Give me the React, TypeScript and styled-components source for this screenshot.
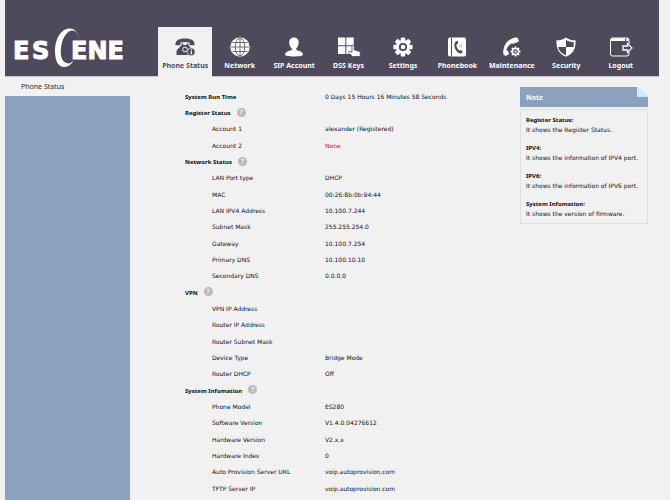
import React from "react";
import styled, { createGlobalStyle } from "styled-components";

const GlobalStyle = createGlobalStyle`
  * { box-sizing: border-box; }
  body {
    margin: 0;
    background: #f1f1f1;
    color: #101016;
    font-family: "Noto Sans", "Open Sans", sans-serif;
    font-size: 7px;
    line-height: 16px;
  }
  html { overflow: hidden; }
`;

const Page = styled.div`
  padding: 0 11px 0 5px;
`;

const Header = styled.header`
  display: flex;
  align-items: flex-end;
  height: 77px;
  padding-right: 11px;
  background: #4f495c;
  border-bottom: 1px solid #c9c6d0;
`;

const LogoLink = styled.a`
  flex: 0 0 153px;
  padding: 0 0 6px 8px;
  line-height: 0;
`;

const Nav = styled.nav`
  flex: 1;
  display: grid;
  grid-template-columns: repeat(9, 1fr);
  margin-bottom: -1px;
`;

const Tab = styled.a<{ $active?: boolean }>`
  display: flex;
  flex-direction: column;
  align-items: center;
  height: 50px;
  padding-top: 10px;
  gap: 1px;
  color: ${(p) => (p.$active ? "#4f495c" : "#ffffff")};
  background: ${(p) => (p.$active ? "#f1f1f1" : "transparent")};
  font-size: 7px;
  font-weight: 700;
  text-decoration: none;
  white-space: nowrap;
`;

const Columns = styled.div`
  display: flex;
  align-items: flex-start;
`;

const Side = styled.aside`
  flex: 0 0 125px;
  display: flex;
  flex-direction: column;
  height: calc(100vh - 77px);
`;

const SideLink = styled.a`
  height: 19px;
  padding-left: 16px;
  color: #2c2833;
  font-size: 7px;
  line-height: 20px;
  text-decoration: none;
`;

const SideFill = styled.div`
  flex: 1;
  background: #8ba1bd;
`;

const Main = styled.main`
  flex: 1;
  padding: 11px 0 0 55px;
`;

const StatusTable = styled.table`
  width: 100%;
  table-layout: fixed;
  border-collapse: collapse;
`;

const Row = styled.tr`
  height: 16px;
  &:nth-child(3n + 1) { height: 17px; }
`;

const NameCell = styled.th<{ $section?: boolean }>`
  width: 140px;
  padding: 0 0 0 ${(p) => (p.$section ? 0 : 27)}px;
  color: ${(p) => (p.$section ? "#08080c" : "inherit")};
  font-family: ${(p) => (p.$section ? '"Noto Sans"' : '"DejaVu Sans"')}, sans-serif;
  font-size: 6px;
  font-weight: ${(p) => (p.$section ? 700 : 400)};
  text-align: left;
  white-space: nowrap;
`;

const ValueCell = styled.td<{ $alert?: boolean }>`
  padding: 0;
  color: ${(p) => (p.$alert ? "#ff0000" : "inherit")};
  font-family: "DejaVu Sans", sans-serif;
  font-size: 6px;
  white-space: nowrap;
`;

const NameLine = styled.span`
  display: flex;
  align-items: center;
  gap: 6px;
  height: 16px;
`;

const HelpButton = styled.button`
  width: 9px;
  height: 9px;
  margin-bottom: 2px;
  padding: 0;
  border: 0;
  border-radius: 50%;
  background: #b9b9b9;
  color: #f1f1f1;
  font: 700 7px/9px "Noto Sans", sans-serif;
  text-align: center;
`;

const NoteColumn = styled.aside`
  flex: 0 0 128px;
  min-width: 0;
  margin: 10px 11px 0 0;
`;

const NoteTitle = styled.h2`
  display: flex;
  justify-content: space-between;
  height: 20px;
  margin: 0 0 2px;
  padding-left: 6px;
  background: #8ba1bd;
  color: #ffffff;
  font-size: 7px;
  line-height: 22px;
`;

const NoteBody = styled.dl`
  margin: 0;
  padding: 6px 5px 5px;
  border: 1px solid #dedede;
  font-size: 6px;
  line-height: 9px;
`;

const NoteTerm = styled.dt`
  color: #08080c;
  font-weight: 700;
  &:not(:first-child) { margin-top: 10px; }
`;

const NoteText = styled.dd`
  margin: 0;
  font-family: "DejaVu Sans", sans-serif;
  white-space: nowrap;
`;

const Logo = () => (
  <svg width="116" height="44" viewBox="0 0 116 44" role="img" aria-label="ESCENE">
    <g fill="#ffffff" stroke="#ffffff" strokeWidth="1" fontFamily="DejaVu Sans, sans-serif" fontWeight="700" fontSize="24">
      <text x="0" y="33">E</text>
      <text x="19" y="33">S</text>
      <text x="58" y="33">ENE</text>
    </g>
    <path
      d="M66 13C65 7 62 2.500 57 2.500C48 2.500 42 13 42 25C42 36 46 41 51 41C55 41 58.500 38.500 60.500 34.500C58 37 55.500 38 53.500 37C49 35.500 47 30 48 22C49 12 54 4.500 59.500 4.500C63 4.500 65 8 66 13Z"
      fill="#ffffff"
      stroke="#4f495c"
      strokeWidth="2"
      paintOrder="stroke"
    />
  </svg>
);

const Icon = ({ children }: { children: React.ReactNode }) => (
  <svg width="24" height="20" viewBox="0 0 24 20" fill="currentColor" aria-hidden="true">
    {children}
  </svg>
);

const ShadeBg = "#4f495c";

const gearTeeth = (cx: number, cy: number, r: number, w: number, h: number) =>
  [0, 45, 90, 135, 180, 225, 270, 315].map((a) => (
    <rect
      key={a}
      x={cx - w / 2}
      y={cy - r}
      width={w}
      height={h}
      rx={w / 5}
      transform={`rotate(${a} ${cx} ${cy})`}
    />
  ));

const PhoneIcon = () => (
  <Icon>
    <path d="M2.500 8.200C2 4 5 1.500 12 1.500C19 1.500 22 4 21.500 8.200L16.800 8.200L16.500 5.500C13.500 4.700 10.500 4.700 7.500 5.500L7.200 8.200Z" />
    <path d="M8.500 6.500H10.200V8H13.800V6.500H15.500V8.500C16.500 9.500 19.500 12.500 20 14V18H3.500V14C4.500 11.800 7.500 9.500 8.500 8.500Z" />
    <circle cx="12" cy="12.500" r="2.400" fill="none" stroke="#f1f1f1" strokeWidth="1" />
    <circle cx="18.200" cy="14.800" r="3.900" stroke="#f1f1f1" strokeWidth=".6" />
    <path d="M17.700 12.300H19V13.400H17.700ZM17.600 14.200H19V17.200H17.600Z" fill="#f1f1f1" />
  </Icon>
);

const GlobeIcon = () => (
  <Icon>
    <circle cx="12" cy="10" r="9.700" />
    <g fill="none" stroke={ShadeBg} strokeWidth=".8">
      <path d="M12 1V19M3 10H21M4.500 5.500H19.500M4.500 14.500H19.500" />
      <ellipse cx="12" cy="10" rx="4.700" ry="9" />
    </g>
  </Icon>
);

const UserIcon = () => (
  <Icon>
    <path d="M12 .5C8.800 .5 7 2.800 7.300 6C7.500 8.500 8.500 10.500 9.800 11.500V13C7 14 3.500 14.500 3 17.500C3 18.800 6.500 19.500 12 19.500C17.500 19.500 21 18.800 21 17.500C20.500 14.500 17 14 14.200 13V11.500C15.500 10.500 16.500 8.500 16.700 6C17 2.800 15.200 .5 12 .5Z" />
  </Icon>
);

const KeysIcon = () => (
  <Icon>
    <path d="M1 .5H8.300V8.300H1ZM9.300 .5H16.700V8.300H9.300ZM1 9.300H8.300V17H1ZM9.300 9.300H16.700V17H9.300Z" />
    <path
      d="M15.300 8.200C16.300 7.800 17.200 8.200 17.200 9.300V13L22 14.200C23 14.500 23.300 15 23.200 16V19.500H15.500L11.500 15.700C11 15 12 14 13 14.300L15 15.300V9Z"
      stroke={ShadeBg}
      strokeWidth=".8"
    />
  </Icon>
);

const SettingsIcon = () => (
  <Icon>
    <circle cx="12" cy="10" r="7" />
    {gearTeeth(12, 10, 9.6, 4.4, 4)}
    <circle cx="12" cy="10" r="3.200" fill="none" stroke={ShadeBg} strokeWidth="1.800" />
  </Icon>
);

const PhonebookIcon = () => (
  <Icon>
    <rect x="3" y=".5" width="18" height="19" rx="2" />
    <path d="M6.500 .5V19.500" stroke={ShadeBg} strokeWidth="1" />
    <path
      d="M12.500 3.500C9.800 4.500 9 7 9.500 10C10.300 13.300 12.500 15.800 15.500 16.500L18 15.500L16.300 13L14.300 13.500C12.500 12 11.500 10 11.400 7.500L13.300 6.500Z"
      fill={ShadeBg}
    />
    <path d="M14 8C14.600 8.600 14.600 9.600 14 10.300M15.800 6.500C16.800 7.700 16.800 9.700 15.800 11" fill="none" stroke={ShadeBg} strokeWidth=".4" />
  </Icon>
);

const MaintenanceIcon = () => (
  <Icon>
    <path d="M12 1.500C6.500 4 3.500 9 3.200 15.500C3.100 17.500 4.500 19.300 6.200 18.700L8.500 17.500C9.200 17 9.200 16.400 8.800 15.800L7.500 13.700C7.100 13.200 6.700 13.300 6.300 13.500C6.500 10.500 9 7.500 12.200 6.200C12.500 6.900 13.300 7 14 6.600L17.800 5C18.800 4.500 19 3.800 18.700 3L18 1.500C17.400 .3 15 .3 12 1.500Z" />
    <g>{gearTeeth(15.500, 14.500, 5, 2, 3)}</g>
    <circle cx="15.500" cy="14.500" r="3.600" />
    <circle cx="15.500" cy="14.500" r="2.300" fill={ShadeBg} />
    <circle cx="15.500" cy="14.500" r="1.100" />
  </Icon>
);

const ShieldIcon = () => (
  <Icon>
    <path d="M12 .5C9.500 2.500 6 3.300 2.500 3.300C2 11 4.500 17 12 19.700C19.500 17 22 11 21.500 3.300C18 3.300 14.500 2.500 12 .5Z" />
    <path d="M12 10V3C14.500 4.500 17 5 19.700 5.200V10ZM12 10H4.200C5 13.800 7.500 16.500 12 18.200Z" fill={ShadeBg} />
  </Icon>
);

const LogoutIcon = () => (
  <Icon>
    <path d="M20 7V3Q20 1 18 1H3.500Q1.500 1 1.500 3V17Q1.500 19 3.500 19H18Q20 19 20 17V15" fill="none" stroke="currentColor" strokeWidth="1" />
    <path d="M2 1.200H16V4H2ZM17 1.500H19.500V4H17Z" />
    <path d="M14 9H18.500V6.500L23 11L18.500 15.500V13H14Z" fill={ShadeBg} stroke="currentColor" strokeWidth="1.300" />
  </Icon>
);

const tabs = [
  { label: "Phone Status", icon: PhoneIcon },
  { label: "Network", icon: GlobeIcon },
  { label: "SIP Account", icon: UserIcon },
  { label: "DSS Keys", icon: KeysIcon },
  { label: "Settings", icon: SettingsIcon },
  { label: "Phonebook", icon: PhonebookIcon },
  { label: "Maintenance", icon: MaintenanceIcon },
  { label: "Security", icon: ShieldIcon },
  { label: "Logout", icon: LogoutIcon },
];

type StatusRow = { name: string; value?: string; section?: boolean; help?: boolean; alert?: boolean };

const rows: StatusRow[] = [
  { name: "System Run Time", value: "0 Days 15 Hours 16 Minutes 58 Seconds", section: true },
  { name: "Register Status", section: true, help: true },
  { name: "Account 1", value: "alexander (Registered)" },
  { name: "Account 2", value: "None", alert: true },
  { name: "Network Status", section: true, help: true },
  { name: "LAN Port type", value: "DHCP" },
  { name: "MAC", value: "00:26:8b:0b:94:44" },
  { name: "LAN IPV4 Address", value: "10.100.7.244" },
  { name: "Subnet Mask", value: "255.255.254.0" },
  { name: "Gateway", value: "10.100.7.254" },
  { name: "Primary DNS", value: "10.100.10.10" },
  { name: "Secondary DNS", value: "0.0.0.0" },
  { name: "VPN", section: true, help: true },
  { name: "VPN IP Address" },
  { name: "Router IP Address" },
  { name: "Router Subnet Mask" },
  { name: "Device Type", value: "Bridge Mode" },
  { name: "Router DHCP", value: "Off" },
  { name: "System Infomation", section: true, help: true },
  { name: "Phone Model", value: "ES280" },
  { name: "Software Version", value: "V1.4.0.04276612" },
  { name: "Hardware Version", value: "V2.x.x" },
  { name: "Hardware Index", value: "0" },
  { name: "Auto Provision Server URL", value: "voip.autoprovision.com" },
  { name: "TFTP Server IP", value: "voip.autoprovision.com" },
];

const notes = [
  ["Register Status:", "It shows the Register Status."],
  ["IPV4:", "It shows the information of IPV4 port."],
  ["IPV6:", "It shows the information of IPV6 port."],
  ["System Infomation:", "It shows the version of firmware."],
];

export default function App() {
  return (
    <>
      <GlobalStyle />
      <Page>
        <Header>
          <LogoLink href="#home"><Logo /></LogoLink>
          <Nav>
            {tabs.map(({ label, icon: TabIcon }, i) => (
              <Tab key={label} href={`#tab-${i}`} $active={i === 0}>
                <TabIcon />
                {label}
              </Tab>
            ))}
          </Nav>
        </Header>
        <Columns>
          <Side>
            <SideLink href="#phone-status">Phone Status</SideLink>
            <SideFill />
          </Side>
          <Main>
            <StatusTable>
              <tbody>
                {rows.map((row) => (
                  <Row key={row.name}>
                    <NameCell scope="row" $section={row.section}>
                      <NameLine>
                        {row.name}
                        {row.help && <HelpButton type="button" aria-label={`Help: ${row.name}`}>?</HelpButton>}
                      </NameLine>
                    </NameCell>
                    <ValueCell $alert={row.alert}>{row.value}</ValueCell>
                  </Row>
                ))}
              </tbody>
            </StatusTable>
          </Main>
          <NoteColumn>
            <NoteTitle>
              Note
              <svg width="11" height="10" viewBox="0 0 11 10" aria-hidden="true">
                <path d="M0 0H11V10Z" fill="#f1f1f1" />
                <path d="M0 0L11 10H0Z" fill="#cfeafa" />
              </svg>
            </NoteTitle>
            <NoteBody>
              {notes.map(([term, text]) => (
                <React.Fragment key={term}>
                  <NoteTerm>{term}</NoteTerm>
                  <NoteText>{text}</NoteText>
                </React.Fragment>
              ))}
            </NoteBody>
          </NoteColumn>
        </Columns>
      </Page>
    </>
  );
}
